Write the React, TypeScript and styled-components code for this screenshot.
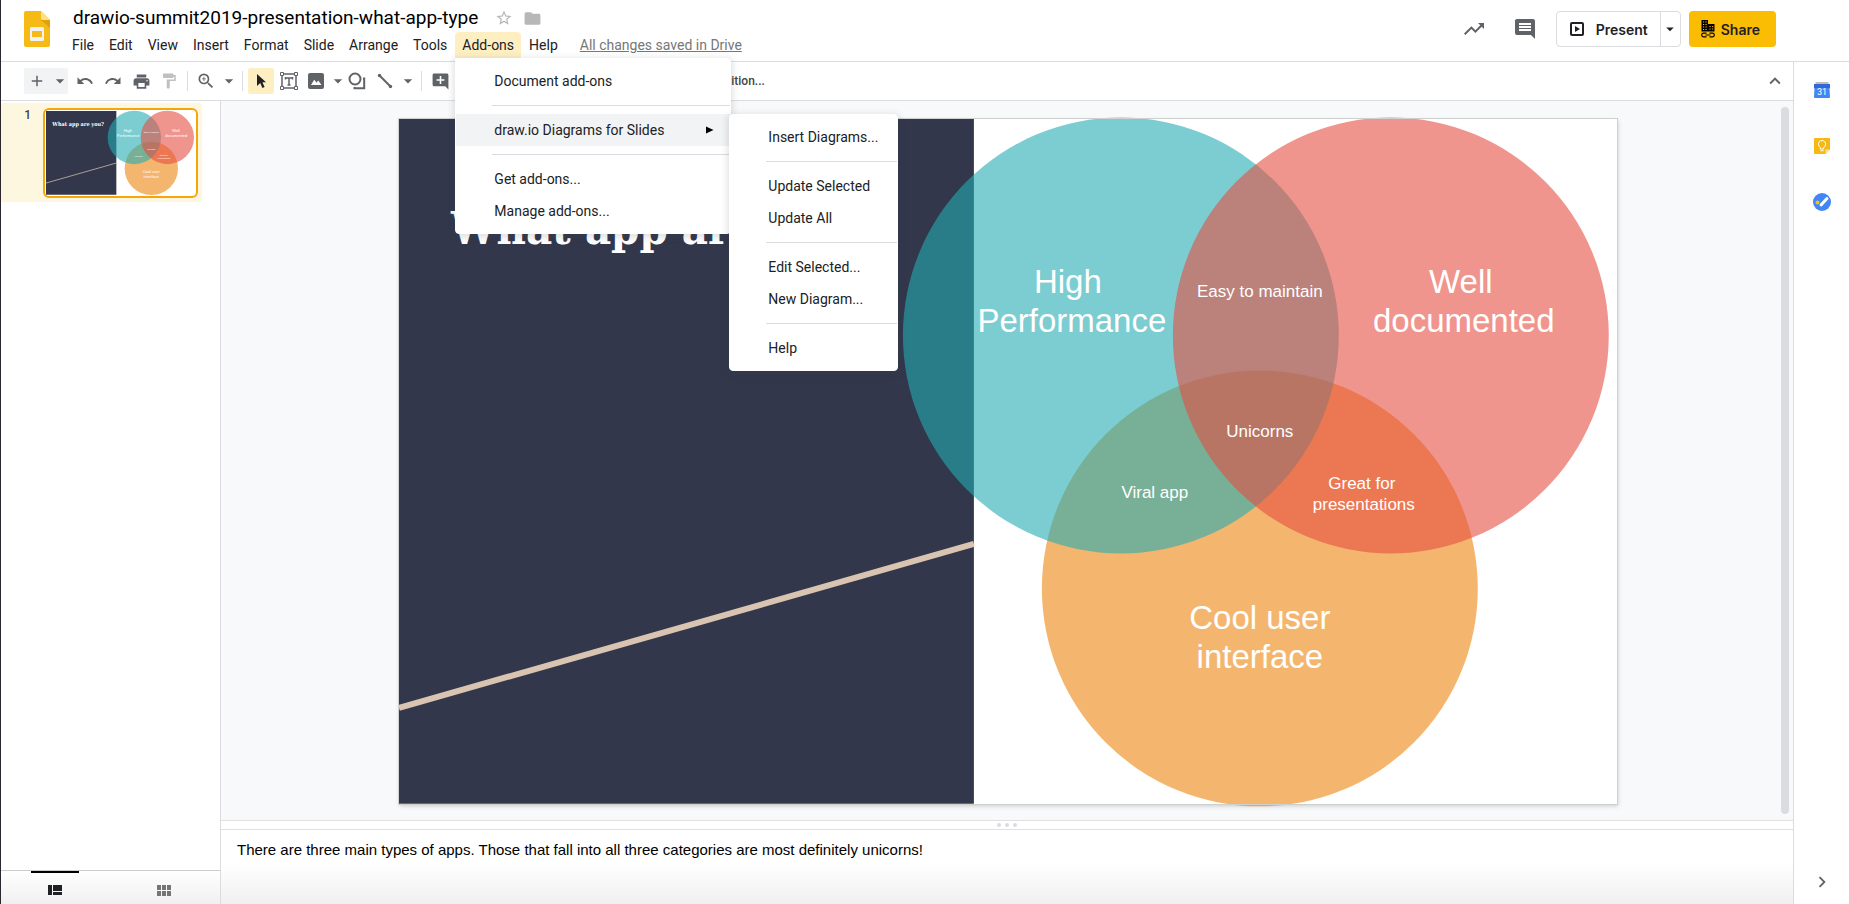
import React from "react";
import styled, { createGlobalStyle } from "styled-components";
import {
  MdAdd,
  MdAddComment,
  MdArrowDropDown,
  MdChevronRight,
  MdComment,
  MdExpandLess,
  MdFolder,
  MdFormatPaint,
  MdPrint,
  MdRedo,
  MdStarBorder,
  MdTrendingUp,
  MdUndo,
  MdZoomIn,
} from "react-icons/md";

const line = "#dadce0";
const ink = "#202124";
const iconGrey = "#5f6368";

const GlobalStyle = createGlobalStyle`
  *, *::before, *::after { box-sizing: border-box; }
  body { margin: 0; background: #fff; color: ${ink}; font-family: Roboto, "Liberation Sans", sans-serif; font-size: 14px; }
  button { font: inherit; color: inherit; background: none; border: 0; padding: 0; margin: 0; cursor: pointer; }
  svg { display: block; }
`;

const Shell = styled.div`
  display: flex;
  flex-direction: column;
  height: 100vh;
  border-left: 1px solid #2b2630;
  overflow: hidden;
`;

/* Header */

const Header = styled.header`
  display: flex;
  align-items: flex-start;
  height: 62px;
  flex: none;
  padding: 0 73px 0 23px;
  border-bottom: 1px solid ${line};
`;

const Logo = styled.a`
  display: block;
  margin-top: 11px;
`;

const HeaderMain = styled.div`
  display: flex;
  flex-direction: column;
  flex: 1;
  min-width: 0;
  padding: 4px 0 0 15px;
`;

const TitleRow = styled.div`
  display: flex;
  align-items: center;
  height: 28px;
  padding-left: 8px;
`;

const DocTitle = styled.h1`
  margin: 0 12px 0 0;
  font-weight: 400;
  font-size: 19px;
  line-height: 28px;
  color: #000;
  white-space: nowrap;
`;

const TitleButton = styled.button`
  display: grid;
  place-items: center;
  width: 28px;
  height: 28px;
  color: #b7b7b7;
`;

const MenuBar = styled.nav`
  display: flex;
  align-items: center;
  height: 26px;
`;

const MenuSlot = styled.div`
  position: relative;
`;

const MenuButton = styled.button<{ $open?: boolean }>`
  height: 26px;
  padding: 0 7px;
  margin-right: 1px;
  line-height: 26px;
  border-radius: 4px 4px 0 0;
  background: ${(p) => (p.$open ? "#feefc3" : "transparent")};
  white-space: nowrap;
`;

const SavedLink = styled.a`
  margin-left: 14px;
  color: #777;
  white-space: nowrap;
`;

const HeaderActions = styled.div`
  display: flex;
  align-items: center;
  height: 58px;
  color: ${iconGrey};
`;

const RoundButton = styled.button`
  display: grid;
  place-items: center;
  width: 40px;
  height: 40px;
  margin-right: 11px;
`;

const PresentGroup = styled.div`
  display: flex;
  height: 36px;
  border: 1px solid ${line};
  border-radius: 4px;
  color: ${ink};
`;

const ActionLabel = styled.span`
  font-family: Inter, "Liberation Sans", sans-serif;
  font-weight: 600;
  font-size: 14px;
`;

const PresentButton = styled.button`
  display: flex;
  align-items: center;
  gap: 10px;
  padding: 0 12px 0 11px;
`;

const PresentMore = styled.button`
  display: grid;
  place-items: center;
  width: 20px;
  border-left: 1px solid ${line};
`;

const ShareButton = styled.button`
  display: flex;
  align-items: center;
  gap: 6px;
  height: 36px;
  margin-left: 8px;
  padding: 0 16px 0 12px;
  border-radius: 4px;
  background: #fbbc04;
  color: ${ink};
`;

/* Drop-down menus */

const Menu = styled.div`
  position: absolute;
  top: 100%;
  left: 0;
  z-index: 5;
  width: 276px;
  padding: 6px 0;
  border: 1px solid #fff;
  border-radius: 0 4px 4px 4px;
  background: #fff;
  box-shadow: 0 2px 6px 2px rgba(60, 64, 67, 0.15);
`;

const SubMenu = styled(Menu)`
  top: 0;
  left: calc(100% - 1px);
  width: 169px;
  border-radius: 4px;
`;

const MenuItem = styled.button<{ $active?: boolean }>`
  display: flex;
  align-items: center;
  justify-content: space-between;
  width: 100%;
  height: 32px;
  padding: 0 16px 0 38px;
  background: ${(p) => (p.$active ? "#f1f3f4" : "transparent")};
  text-align: left;
  white-space: nowrap;
`;

const MenuDivider = styled.hr`
  height: 1px;
  margin: 8px 0 8px 36px;
  border: 0;
  background: ${line};
`;

/* Body */

const Body = styled.div`
  display: flex;
  flex: 1;
  min-height: 0;
`;

const Editor = styled.div`
  display: flex;
  flex-direction: column;
  flex: 1;
  min-width: 0;
`;

const Toolbar = styled.div`
  display: flex;
  align-items: center;
  gap: 2px;
  flex: none;
  height: 39px;
  padding: 0 5px 0 23px;
  border-bottom: 1px solid ${line};
  color: ${iconGrey};
`;

const ToolButton = styled.button<{ $on?: boolean; $faded?: boolean }>`
  display: grid;
  place-items: center;
  width: 26px;
  height: 26px;
  border-radius: 2px;
  background: ${(p) => (p.$on ? "#feefc3" : "transparent")};
  opacity: ${(p) => (p.$faded ? 0.4 : 1)};
`;

const CaretButton = styled.button`
  display: grid;
  place-items: center;
  width: 18px;
  height: 26px;
`;

const SplitTool = styled.div<{ $filled?: boolean; $tight?: boolean }>`
  display: flex;
  margin-right: ${(p) => (p.$filled ? "2px" : "0")};
  border-radius: 2px;
  background: ${(p) => (p.$filled ? "#f1f3f4" : "transparent")};

  ${ToolButton} {
    width: ${(p) => (p.$tight ? "24px" : "26px")};
  }
  ${CaretButton} {
    width: ${(p) => (p.$tight ? "14px" : "18px")};
  }
`;

const ToolDivider = styled.span`
  width: 1px;
  height: 20px;
  margin: 0 3px;
  background: ${line};
`;

const TextTool = styled.button`
  margin-left: 246px;
  font-size: 12px;
  font-weight: 500;
  color: #444;
`;

const CollapseButton = styled(ToolButton)`
  margin-left: auto;
`;

const Workspace = styled.div`
  display: flex;
  flex: 1;
  min-height: 0;
`;

const Filmstrip = styled.aside`
  display: flex;
  flex-direction: column;
  flex: none;
  width: 220px;
  border-right: 1px solid ${line};
`;

const FilmRow = styled.div`
  display: flex;
  align-items: flex-start;
  width: 201px;
  margin-top: 2px;
  padding: 5px 0 4px;
  border-radius: 0 4px 4px 0;
  background: #fef7e0;
`;

const FilmNumber = styled.span`
  width: 42px;
  padding-right: 12px;
  text-align: right;
  line-height: 14px;
  font-size: 12px;
  font-weight: 500;
  color: #3c4043;
`;

const Thumb = styled.button`
  width: 155px;
  padding: 1px;
  border: 2px solid #f4a60b;
  border-radius: 6px;
  background: #fff;
`;

const ViewTabs = styled.div`
  display: flex;
  height: 34px;
  margin-top: auto;
  padding-right: 2px;
  border-top: 1px solid #ccc;
  background: linear-gradient(#fff, #f0f0f0);
`;

const ViewTab = styled.button<{ $on?: boolean }>`
  display: flex;
  flex-direction: column;
  align-items: center;
  gap: 12px;
  flex: 1;
  color: ${(p) => (p.$on ? ink : "#757575")};

  &::before {
    content: "";
    width: 48px;
    height: 2px;
    background: ${(p) => (p.$on ? "#000" : "transparent")};
  }
`;

const Stage = styled.div`
  display: flex;
  flex-direction: column;
  flex: 1;
  min-width: 0;
`;

const Canvas = styled.div`
  position: relative;
  display: flex;
  justify-content: center;
  flex: 1;
  min-height: 0;
  padding: 18px 0 16px 2px;
  background: #f8f9fa;
`;

const SlideFrame = styled.div`
  height: 100%;
  aspect-ratio: 16 / 9;
  background: #fff;
  outline: 1px solid #cfd1cf;
  box-shadow: 1px 2px 4px rgba(60, 64, 67, 0.25);
`;

const ScrollThumb = styled.div`
  position: absolute;
  top: 6px;
  right: 4px;
  bottom: 6px;
  width: 8px;
  border-radius: 4px;
  background: ${line};
`;

const Splitter = styled.div`
  display: flex;
  align-items: center;
  justify-content: center;
  gap: 4px;
  flex: none;
  height: 10px;
  border: solid #e0e0e0;
  border-width: 1px 0;
`;

const Grip = styled.span`
  width: 4px;
  height: 4px;
  border-radius: 50%;
  background: ${line};
`;

const Notes = styled.section`
  flex: none;
  height: 74px;
  padding: 10px 16px;
  background: linear-gradient(#fff 45%, #f0f0f0);
`;

const NotesText = styled.p`
  margin: 0;
  font-family: "Liberation Sans", Arial, sans-serif;
  font-size: 15px;
  line-height: 20px;
  color: #000;
`;

const SidePanel = styled.aside`
  display: flex;
  flex-direction: column;
  align-items: center;
  flex: none;
  width: 56px;
  padding: 8px 0 2px;
  border-left: 1px solid ${line};
`;

const SideButton = styled.button`
  display: grid;
  place-items: center;
  width: 40px;
  height: 40px;
  margin-bottom: 16px;
`;

const SideToggle = styled(SideButton)`
  margin: auto 0 0;
  color: ${iconGrey};
`;

/* Drawings */

const SlidesLogo = () => (
  <svg width="26" height="36" viewBox="0 0 26 36">
    <path d="M2 0h15l9 9v25a2 2 0 0 1-2 2H2a2 2 0 0 1-2-2V2a2 2 0 0 1 2-2z" fill="#f5ba15" />
    <path d="M17 9h9v8z" fill="#e0a10e" />
    <path d="M17 0l9 9h-7a2 2 0 0 1-2-2z" fill="#fbdf8b" />
    <path
      d="M7.500 16h11a1.500 1.500 0 0 1 1.500 1.500v11a1.500 1.500 0 0 1-1.500 1.500h-11A1.500 1.500 0 0 1 6 28.500v-11A1.500 1.500 0 0 1 7.500 16zM8 20v6h10v-6z"
      fill="#f1f1f1"
      fillRule="evenodd"
    />
  </svg>
);

const PointerIcon = () => (
  <svg width="18" height="18" viewBox="0 0 18 18">
    <path d="M5 2v12l3.200-3 2.200 5 2.200-1-2.200-4.800H14z" fill={ink} />
  </svg>
);

const TextBoxIcon = () => (
  <svg width="18" height="18" viewBox="0 0 18 18" fill="none" stroke="currentColor">
    <path d="M4 2h10M4 16h10M2 4v10M16 4v10" strokeWidth="1.500" />
    <path d="M.500.500h3v3h-3zM14.500.500h3v3h-3zM.500 14.500h3v3h-3zM14.500 14.500h3v3h-3z" />
    <path d="M5 6h8M9 6v7M5.500 5v2.500M12.500 5v2.500M7.500 13h3" strokeWidth="1.500" />
  </svg>
);

const PictureIcon = () => (
  <svg width="18" height="18" viewBox="0 0 18 18">
    <path
      d="M3 1h12a2 2 0 0 1 2 2v12a2 2 0 0 1-2 2H3a2 2 0 0 1-2-2V3a2 2 0 0 1 2-2zM4 13h10.500l-3.300-4.500-1.700 2.200-1-1.400-1.300-1.600z"
      fill="currentColor"
      fillRule="evenodd"
    />
  </svg>
);

const ShapeIcon = () => (
  <svg width="18" height="18" viewBox="0 0 18 18" fill="none" stroke="currentColor" strokeWidth="2">
    <circle cx="7" cy="7" r="5.500" />
    <path d="M15 6.500h1.200v9.700H6.500V15" />
  </svg>
);

const LineIcon = () => (
  <svg width="18" height="18" viewBox="0 0 18 18">
    <path d="M3.500 3.500l11 11" stroke="currentColor" strokeWidth="2" />
    <circle cx="3.500" cy="3.500" r="1.700" fill="currentColor" />
    <circle cx="14.500" cy="14.500" r="1.700" fill="currentColor" />
  </svg>
);

const PresentIcon = () => (
  <svg width="18" height="18" viewBox="0 0 18 18">
    <rect x="3" y="3" width="12" height="12" rx="1" fill="none" stroke="currentColor" strokeWidth="2" />
    <path d="M7 6v6l5-3z" fill="currentColor" />
  </svg>
);

const ShareIcon = () => (
  <svg width="14" height="18" viewBox="0 0 14 18">
    <path d="M.500 0h6.500v4h6.500v7.500H.500z" fill="#000" />
    <path
      d="M2 2h1.200M4.500 2h1.200M2 4.500h1.200M4.500 4.500h1.200M2 7h1.200M4.500 7h1.200M2 9.500h1.200M4.500 9.500h1.200M8.500 6.500h1.200M11 6.500h1.200M8.500 9h1.200M11 9h1.200"
      stroke="#fbbc04"
    />
    <path
      d="M5.500 13.200h-3a1.800 1.800 0 0 0 0 3.600h3M8.500 13.200h3a1.800 1.800 0 0 1 0 3.600h-3M4.500 15h5"
      fill="none"
      stroke="#000"
      strokeWidth="1.200"
    />
  </svg>
);

const FilmViewIcon = () => (
  <svg width="14" height="10" viewBox="0 0 14 10" fill="currentColor">
    <path d="M0 0h4v10H0zM5 0h9v6H5zM5 7h9v3H5z" />
  </svg>
);

const GridViewIcon = () => (
  <svg width="14" height="11" viewBox="0 0 14 11" fill="currentColor">
    <path d="M0 0h4v5H0zM5 0h4v5H5zM10 0h4v5h-4zM0 6h4v5H0zM5 6h4v5H5zM10 6h4v5h-4z" />
  </svg>
);

const CalendarIcon = () => (
  <svg width="16" height="16" viewBox="0 0 16 16">
    <path d="M1.500 0h13v3h-13z" fill="#bdbdbd" />
    <path d="M0 2h16v4l-.500 1 .500 8a1 1 0 0 1-1 1H1a1 1 0 0 1-1-1l.500-8L0 6z" fill="#4285f4" />
    <path d="M0 2h16v4H0z" fill="#3367d6" />
    <text x="8" y="13" textAnchor="middle" fontFamily="Roboto, sans-serif" fontSize="9" fill="#fff">
      31
    </text>
  </svg>
);

const KeepIcon = () => (
  <svg width="16" height="16" viewBox="0 0 16 16">
    <path d="M1 0h14a1 1 0 0 1 1 1v10.500L11.500 16H1a1 1 0 0 1-1-1V1a1 1 0 0 1 1-1z" fill="#f5b912" />
    <path d="M11.500 16v-4.500H16z" fill="#fce29a" />
    <path d="M6.300 9.300a3.600 3.600 0 1 1 3.400 0v1.700H6.300zM6.500 12.700h3" fill="none" stroke="#fff" />
  </svg>
);

const TasksIcon = () => (
  <svg width="18" height="18" viewBox="0 0 18 18">
    <circle cx="9" cy="9" r="9" fill="#4285f4" />
    <path d="M8 12l6-6.500" stroke="#fff" strokeWidth="3" strokeLinecap="round" />
    <circle cx="4.500" cy="9.500" r="2" fill="#fbbc04" />
  </svg>
);

const SlideSvg = styled.svg`
  width: 100%;
  height: auto;
  overflow: visible;
`;

const labels: { text: string; x: number; y: number; size: number }[] = [
  { text: "High", x: 669, y: 174, size: 33 },
  { text: "Performance", x: 673, y: 213, size: 33 },
  { text: "Well", x: 1062, y: 174, size: 33 },
  { text: "documented", x: 1065, y: 213, size: 33 },
  { text: "Cool user", x: 861, y: 510, size: 33 },
  { text: "interface", x: 861, y: 549, size: 33 },
  { text: "Easy to maintain", x: 861, y: 178, size: 17 },
  { text: "Unicorns", x: 861, y: 318, size: 17 },
  { text: "Viral app", x: 756, y: 379, size: 17 },
  { text: "Great for", x: 963, y: 370, size: 17 },
  { text: "presentations", x: 965, y: 391, size: 17 },
];

const Slide = () => (
  <SlideSvg viewBox="0 0 1218 685" role="img" aria-label="What app are you?">
    <path d="M0 0h575v685H0z" fill="#32374c" />
    <path d="M0 589L575 425" stroke="#d9c4b1" strokeWidth="6" />
    <text x="52" y="125" fill="#fff" fontFamily="'DejaVu Serif Condensed', 'DejaVu Serif', serif" fontWeight="700" fontSize="45">
      What app are you?
    </text>
    <circle cx="861" cy="469.500" r="218" fill="rgba(237,133,13,.6)" />
    <circle cx="722" cy="216.500" r="218" fill="rgba(35,172,178,.6)" />
    <circle cx="992" cy="216.500" r="218" fill="rgba(230,78,65,.6)" />
    <g fill="#fff" textAnchor="middle" fontFamily="'Liberation Sans', Arial, sans-serif">
      {labels.map((l) => (
        <text key={l.text} x={l.x} y={l.y} fontSize={l.size}>
          {l.text}
        </text>
      ))}
    </g>
  </SlideSvg>
);

const Caret = ({ label }: { label: string }) => (
  <CaretButton aria-label={label}>
    <MdArrowDropDown size={20} />
  </CaretButton>
);

const AddOnsMenu = () => (
  <Menu role="menu">
    <MenuItem role="menuitem">Document add-ons</MenuItem>
    <MenuDivider />
    <MenuSlot>
      <MenuItem role="menuitem" $active>
        draw.io Diagrams for Slides
        <svg width="8" height="8" viewBox="0 0 8 8">
          <path d="M0 .500v7L7.500 4z" fill="#000" />
        </svg>
      </MenuItem>
      <SubMenu role="menu">
        <MenuItem role="menuitem">Insert Diagrams...</MenuItem>
        <MenuDivider />
        <MenuItem role="menuitem">Update Selected</MenuItem>
        <MenuItem role="menuitem">Update All</MenuItem>
        <MenuDivider />
        <MenuItem role="menuitem">Edit Selected...</MenuItem>
        <MenuItem role="menuitem">New Diagram...</MenuItem>
        <MenuDivider />
        <MenuItem role="menuitem">Help</MenuItem>
      </SubMenu>
    </MenuSlot>
    <MenuDivider />
    <MenuItem role="menuitem">Get add-ons...</MenuItem>
    <MenuItem role="menuitem">Manage add-ons...</MenuItem>
  </Menu>
);

const menus = ["File", "Edit", "View", "Insert", "Format", "Slide", "Arrange", "Tools"];

export default function App() {
  return (
    <Shell>
      <GlobalStyle />
      <Header>
        <Logo href="#home" aria-label="Slides home">
          <SlidesLogo />
        </Logo>
        <HeaderMain>
          <TitleRow>
            <DocTitle>drawio-summit2019-presentation-what-app-type</DocTitle>
            <TitleButton aria-label="Star">
              <MdStarBorder size={18} />
            </TitleButton>
            <TitleButton aria-label="Move to folder">
              <MdFolder size={19} />
            </TitleButton>
          </TitleRow>
          <MenuBar>
            {menus.map((m) => (
              <MenuButton key={m}>{m}</MenuButton>
            ))}
            <MenuSlot>
              <MenuButton $open aria-haspopup="menu" aria-expanded="true">
                Add-ons
              </MenuButton>
              <AddOnsMenu />
            </MenuSlot>
            <MenuButton>Help</MenuButton>
            <SavedLink href="#history">All changes saved in Drive</SavedLink>
          </MenuBar>
        </HeaderMain>
        <HeaderActions>
          <RoundButton aria-label="Activity">
            <MdTrendingUp size={24} />
          </RoundButton>
          <RoundButton aria-label="Comments">
            <MdComment size={24} />
          </RoundButton>
          <PresentGroup>
            <PresentButton>
              <PresentIcon />
              <ActionLabel>Present</ActionLabel>
            </PresentButton>
            <PresentMore aria-label="Present options">
              <MdArrowDropDown size={18} />
            </PresentMore>
          </PresentGroup>
          <ShareButton>
            <ShareIcon />
            <ActionLabel>Share</ActionLabel>
          </ShareButton>
        </HeaderActions>
      </Header>
      <Body>
        <Editor>
          <Toolbar role="toolbar">
            <SplitTool $filled>
              <ToolButton aria-label="New slide">
                <MdAdd size={18} />
              </ToolButton>
              <Caret label="New slide with layout" />
            </SplitTool>
            <ToolButton aria-label="Undo">
              <MdUndo size={18} />
            </ToolButton>
            <ToolButton aria-label="Redo">
              <MdRedo size={18} />
            </ToolButton>
            <ToolButton aria-label="Print">
              <MdPrint size={19} />
            </ToolButton>
            <ToolButton aria-label="Paint format" $faded>
              <MdFormatPaint size={18} />
            </ToolButton>
            <ToolDivider />
            <SplitTool>
              <ToolButton aria-label="Zoom">
                <MdZoomIn size={20} />
              </ToolButton>
              <Caret label="Zoom options" />
            </SplitTool>
            <ToolDivider />
            <ToolButton aria-label="Select" $on>
              <PointerIcon />
            </ToolButton>
            <ToolButton aria-label="Text box">
              <TextBoxIcon />
            </ToolButton>
            <SplitTool $tight>
              <ToolButton aria-label="Insert image">
                <PictureIcon />
              </ToolButton>
              <Caret label="Image options" />
            </SplitTool>
            <ToolButton aria-label="Shape">
              <ShapeIcon />
            </ToolButton>
            <SplitTool>
              <ToolButton aria-label="Line">
                <LineIcon />
              </ToolButton>
              <Caret label="Line options" />
            </SplitTool>
            <ToolDivider />
            <ToolButton aria-label="Add comment">
              <MdAddComment size={19} />
            </ToolButton>
            <TextTool>Transition...</TextTool>
            <CollapseButton aria-label="Hide the menus">
              <MdExpandLess size={22} />
            </CollapseButton>
          </Toolbar>
          <Workspace>
            <Filmstrip>
              <FilmRow>
                <FilmNumber>1</FilmNumber>
                <Thumb aria-label="Slide 1">
                  <Slide />
                </Thumb>
              </FilmRow>
              <ViewTabs>
                <ViewTab $on aria-label="Filmstrip view">
                  <FilmViewIcon />
                </ViewTab>
                <ViewTab aria-label="Grid view">
                  <GridViewIcon />
                </ViewTab>
              </ViewTabs>
            </Filmstrip>
            <Stage>
              <Canvas>
                <SlideFrame>
                  <Slide />
                </SlideFrame>
                <ScrollThumb />
              </Canvas>
              <Splitter>
                <Grip />
                <Grip />
                <Grip />
              </Splitter>
              <Notes>
                <NotesText>
                  There are three main types of apps. Those that fall into all three categories are most definitely
                  unicorns!
                </NotesText>
              </Notes>
            </Stage>
          </Workspace>
        </Editor>
        <SidePanel>
          <SideButton aria-label="Calendar">
            <CalendarIcon />
          </SideButton>
          <SideButton aria-label="Keep">
            <KeepIcon />
          </SideButton>
          <SideButton aria-label="Tasks">
            <TasksIcon />
          </SideButton>
          <SideToggle aria-label="Hide side panel">
            <MdChevronRight size={22} />
          </SideToggle>
        </SidePanel>
      </Body>
    </Shell>
  );
}
